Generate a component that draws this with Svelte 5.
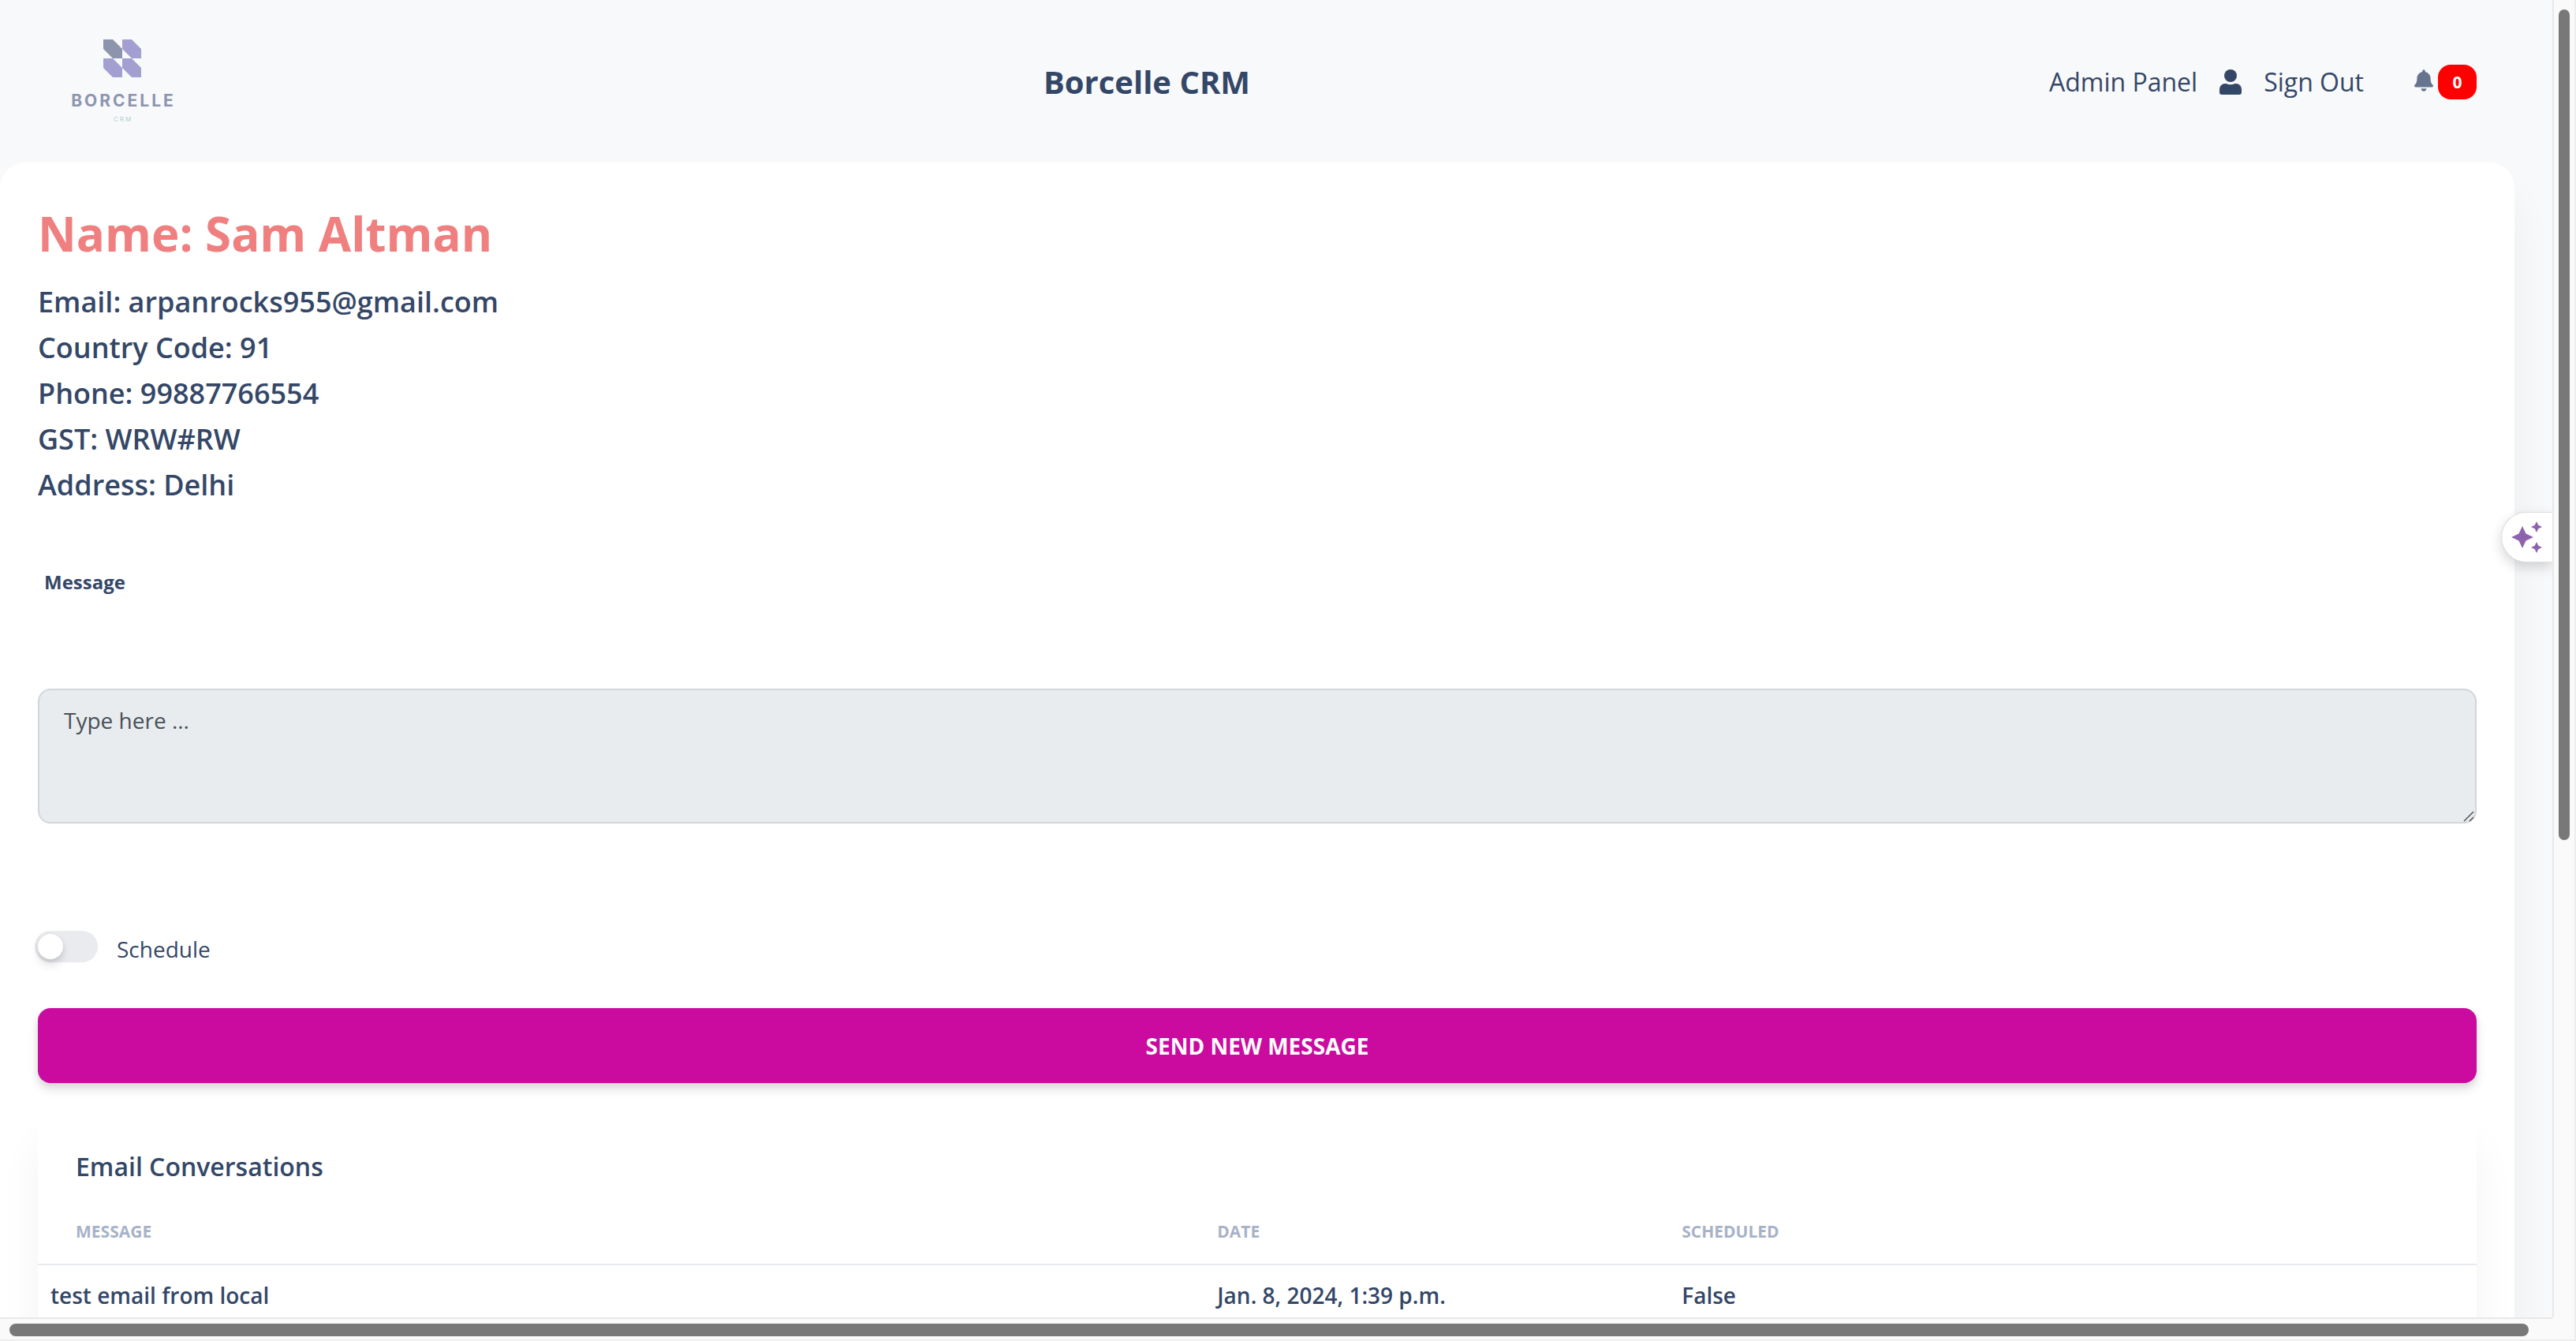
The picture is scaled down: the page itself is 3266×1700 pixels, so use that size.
<script lang="ts">
  let message = $state('');
  let scheduled = $state(false);

  const details = [
    { label: 'Email', value: 'arpanrocks955@gmail.com' },
    { label: 'Country Code', value: '91' },
    { label: 'Phone', value: '99887766554' },
    { label: 'GST', value: 'WRW#RW' },
    { label: 'Address', value: 'Delhi' },
  ];

  const conversations = [
    { message: 'test email from local', date: 'Jan. 8, 2024, 1:39 p.m.', scheduled: 'False' },
  ];
</script>

<div class="window">
  <div class="page">
    <header>
      <a class="logo" href="#home" aria-label="Borcelle home">
        <svg class="mark" viewBox="0 0 48 48" aria-hidden="true">
          <path fill="#8c95ac" d="M0 0h12l12 12v12H12L0 12z" />
          <path fill="#a49fd1" d="M24 0h12l12 12v12H36L24 12zM0 24h12l12 12v12H12L0 36zM24 24h12l12 12v12H36L24 36z" />
        </svg>
        <span class="brand">BORCELLE</span>
        <span class="tag">CRM</span>
      </a>
      <h1>Borcelle CRM</h1>
      <nav>
        <a href="#admin">Admin Panel</a>
        <svg class="user" viewBox="0 0 28 32" aria-hidden="true">
          <circle cx="14" cy="8" r="8" />
          <path d="M7 18h1.500a13 13 0 0 0 11 0H21a7 7 0 0 1 7 7v4a3 3 0 0 1-3 3H3a3 3 0 0 1-3-3v-4a7 7 0 0 1 7-7z" />
        </svg>
        <a href="#signout">Sign Out</a>
        <button class="alerts" type="button" aria-label="Notifications">
          <svg class="bell" viewBox="0 0 448 512" aria-hidden="true">
            <path d="M224 512c35.320 0 63.970-28.650 63.970-64H160.030c0 35.350 28.650 64 63.970 64zm215.390-149.710c-19.320-20.760-55.470-51.990-55.470-154.290 0-77.700-54.480-139.900-127.940-155.160V32c0-17.670-14.320-32-31.980-32s-31.980 14.330-31.980 32v20.840C118.560 68.100 64.080 130.300 64.080 208c0 102.300-36.150 133.530-55.470 154.290-6 6.450-8.660 14.160-8.610 21.710.110 16.400 12.980 32 32.100 32h383.800c19.120 0 32-15.600 32.100-32 .050-7.550-2.610-15.270-8.610-21.710z" />
          </svg>
          <span class="badge">0</span>
        </button>
      </nav>
    </header>

    <main>
      <h2>Name: Sam Altman</h2>
      <ul class="details">
        {#each details as d}
          <li>{d.label}: {d.value}</li>
        {/each}
      </ul>

      <form onsubmit={(e) => e.preventDefault()}>
        <label class="field-label" for="message">Message</label>
        <div class="field">
          <textarea id="message" placeholder="Type here ..." bind:value={message}></textarea>
          <svg class="grip" viewBox="0 0 14 14" aria-hidden="true">
            <path d="M1 13L13 1M8 13l5-5" />
          </svg>
        </div>
        <div class="schedule">
          <input id="schedule" type="checkbox" role="switch" bind:checked={scheduled} />
          <label for="schedule">Schedule</label>
        </div>
        <button class="send" type="submit">SEND NEW MESSAGE</button>
      </form>

      <section class="card">
        <h3>Email Conversations</h3>
        <table>
          <colgroup>
            <col class="c-message" />
            <col class="c-date" />
            <col />
          </colgroup>
          <thead>
            <tr><th>MESSAGE</th><th>DATE</th><th>SCHEDULED</th></tr>
          </thead>
          <tbody>
            {#each conversations as row}
              <tr><td>{row.message}</td><td>{row.date}</td><td>{row.scheduled}</td></tr>
            {/each}
          </tbody>
        </table>
      </section>
    </main>

    <button class="assistant" type="button" aria-label="Assistant">
      <svg viewBox="0 0 40 40" aria-hidden="true">
        <path d="M14 6l4.500 9.500L28 20l-9.500 4.500L14 34l-4.500-9.500L0 20l9.500-4.500zM32 0l2.300 4.700L39 7l-4.700 2.300L32 14l-2.300-4.700L25 7l4.700-2.300zM32 26l2.300 4.700L39 33l-4.700 2.300L32 40l-2.300-4.700L25 33l4.700-2.300z" />
      </svg>
    </button>
  </div>
  <div class="bar vertical" aria-hidden="true"><div class="thumb"></div></div>
  <div class="bar horizontal" aria-hidden="true"><div class="thumb"></div></div>
  <div class="corner"></div>
</div>

<style>
  :global(body) {
    overflow: hidden;
    background: #f8f9fa;
  }

  .window,
  .window * {
    box-sizing: border-box;
  }

  .window {
    display: grid;
    grid-template-columns: minmax(0, 1fr) 30px;
    grid-template-rows: minmax(0, 1fr) 30px;
    height: 100vh;
    font-family: 'Open Sans', sans-serif;
    color: #344767;
  }

  .page {
    position: relative;
    overflow: hidden;
    background: #f8f9fb;
  }

  header {
    display: flex;
    justify-content: space-between;
    align-items: center;
    height: 206px;
    padding: 2px 96px 0 0;
  }

  .logo {
    display: flex;
    flex-direction: column;
    align-items: center;
    width: 310px;
    padding-bottom: 2px;
    text-decoration: none;
    font-family: Inter, sans-serif;
  }

  .mark {
    width: 48px;
    height: 48px;
  }

  .brand {
    margin-top: 18px;
    padding-left: 3px;
    font-size: 21px;
    line-height: 24px;
    font-weight: 700;
    letter-spacing: 3px;
    color: #8c95b0;
  }

  .tag {
    margin-top: 6px;
    padding-left: 2px;
    font-size: 8px;
    line-height: 10px;
    letter-spacing: 2px;
    color: #b0d2cf;
  }

  h1,
  h2,
  h3,
  ul {
    margin: 0;
  }

  h1 {
    font-size: 40px;
    line-height: 56px;
    font-weight: 700;
  }

  nav {
    display: flex;
    align-items: center;
    gap: 28px;
    font-size: 32px;
    line-height: 48px;
  }

  nav a {
    color: inherit;
    text-decoration: none;
  }

  .user {
    width: 28px;
    height: 32px;
    fill: #344767;
  }

  .alerts {
    display: flex;
    align-items: center;
    gap: 6px;
    margin-left: 36px;
    padding: 0;
    border: 0;
    background: none;
  }

  .bell {
    width: 24px;
    height: 28px;
    margin-bottom: 4px;
    fill: #67748e;
  }

  .badge {
    width: 49px;
    border-radius: 16px;
    background: #f00;
    color: #fff;
    font: 700 21px/44px 'Open Sans', sans-serif;
    text-align: center;
  }

  main {
    min-height: 100%;
    margin-right: 48px;
    padding: 48px;
    border-radius: 32px;
    background: #fff;
    box-shadow: 0 40px 54px rgba(0, 0, 0, 0.05);
  }

  h2 {
    font-size: 60px;
    line-height: 84px;
    font-weight: 700;
    color: #f08080;
  }

  .details {
    padding: 16px 0 0;
    list-style: none;
    font-size: 36px;
    line-height: 58px;
    font-weight: 600;
  }

  .field-label {
    display: block;
    margin: 74px 0 0 8px;
    font-size: 24px;
    line-height: 40px;
    font-weight: 700;
  }

  .field {
    position: relative;
    margin-top: 115px;
  }

  textarea {
    display: block;
    width: 100%;
    height: 171px;
    padding: 15px 31px;
    border: 2px solid #d2d6da;
    border-radius: 16px;
    background: #e8ecef;
    color: #495057;
    font: 400 28px/46px 'Open Sans', sans-serif;
    resize: none;
  }

  textarea::placeholder {
    color: #495057;
    opacity: 1;
  }

  .grip {
    position: absolute;
    right: 3px;
    bottom: 2px;
    width: 14px;
    height: 14px;
    fill: none;
    stroke: #555;
    stroke-width: 1.500;
  }

  .schedule {
    display: flex;
    gap: 24px;
    margin: 136px 0 0 -4px;
    font-size: 28px;
    line-height: 46px;
  }

  .schedule input {
    appearance: none;
    display: flex;
    width: 80px;
    height: 40px;
    margin: 0;
    padding: 4px;
    border-radius: 20px;
    background: #e9ebef;
  }

  .schedule input::before {
    content: '';
    width: 32px;
    height: 32px;
    border-radius: 16px;
    background: #fff;
    box-shadow: 0 8px 12px rgba(0, 0, 0, 0.1), 0 2px 6px rgba(0, 0, 0, 0.1);
  }

  .schedule input:checked {
    justify-content: flex-end;
    background: #344767;
  }

  .send {
    position: relative;
    display: block;
    width: 100%;
    height: 95px;
    margin-top: 52px;
    border: 0;
    border-radius: 16px;
    background: #cb0a9f;
    color: #fff;
    font: 700 28px/40px 'Open Sans', sans-serif;
    box-shadow: 0 8px 14px rgba(0, 0, 0, 0.11), 0 4px 8px rgba(0, 0, 0, 0.07);
  }

  .card {
    margin-top: 32px;
    padding: 52px 0 96px;
    border-radius: 32px;
    background: #fff;
    box-shadow: 0 40px 54px rgba(0, 0, 0, 0.05);
  }

  h3 {
    padding: 0 48px;
    font-size: 32px;
    line-height: 44px;
    font-weight: 600;
  }

  table {
    width: 100%;
    table-layout: fixed;
    border-collapse: collapse;
    text-align: left;
  }

  .c-message {
    width: 47.840%;
  }

  .c-date {
    width: 19.050%;
  }

  th {
    padding: 45px 16px 26px;
    border-bottom: 2px solid #e6eaef;
    font-size: 21px;
    line-height: 30px;
    font-weight: 700;
    color: #a7b2c8;
  }

  th:first-child {
    padding-left: 48px;
  }

  td {
    padding: 16px;
    font-size: 28px;
    line-height: 44px;
    font-weight: 600;
  }

  .assistant {
    position: absolute;
    top: 649px;
    right: 0;
    width: 65px;
    height: 64px;
    padding: 0;
    border: 1px solid #ddd;
    border-right: 0;
    border-radius: 32px 0 0 32px;
    background: #fff;
    box-shadow: 0 6px 16px rgba(0, 0, 0, 0.16);
  }

  .assistant svg {
    display: block;
    width: 40px;
    height: 40px;
    margin-left: 12px;
    fill: #8e63ae;
  }

  .bar,
  .corner {
    background: #fafafa;
  }

  .vertical {
    border-left: 2px solid #e8e8e8;
    border-right: 2px solid #ededed;
    padding: 12px 6px;
  }

  .vertical .thumb {
    width: 14px;
    height: 64%;
    border-radius: 8px;
    background: #787878;
  }

  .horizontal {
    border-top: 2px solid #e8e8e8;
    border-bottom: 2px solid #ededed;
    padding: 6px 30px 6px 12px;
  }

  .horizontal .thumb {
    height: 16px;
    border-radius: 8px;
    background: #787878;
  }

  .corner {
    border-right: 2px solid #ededed;
    border-bottom: 2px solid #ededed;
  }
</style>
